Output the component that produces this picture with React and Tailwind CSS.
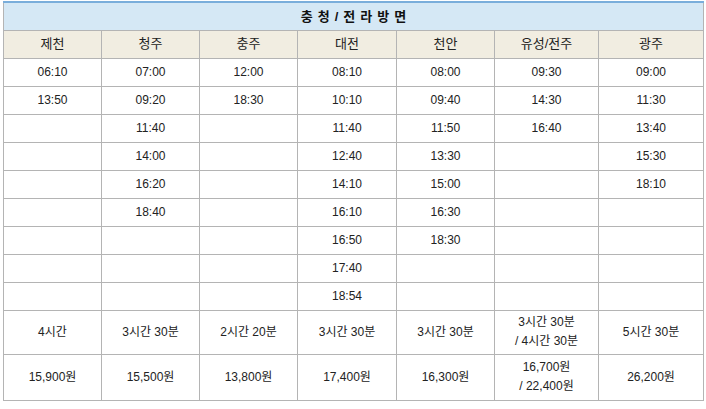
import React from 'react';

const cols = ['제천', '청주', '충주', '대전', '천안', '유성/전주', '광주'];
const widths = ['w-[98px]', 'w-[98px]', 'w-[98px]', 'w-[99px]', 'w-[98px]', 'w-[104px]', 'w-[105px]'];

const times = [
    ['06:10', '13:50'],
    ['07:00', '09:20', '11:40', '14:00', '16:20', '18:40'],
    ['12:00', '18:30'],
    ['08:10', '10:10', '11:40', '12:40', '14:10', '16:10', '16:50', '17:40', '18:54'],
    ['08:00', '09:40', '11:50', '13:30', '15:00', '16:30', '18:30'],
    ['09:30', '14:30', '16:40'],
    ['09:00', '11:30', '13:40', '15:30', '18:10'],
];

const durations = ['4시간', '3시간 30분', '2시간 20분', '3시간 30분', '3시간 30분', ['3시간 30분', '/ 4시간 30분'], '5시간 30분'];
const prices = ['15,900원', '15,500원', '13,800원', '17,400원', '16,300원', ['16,700원', '/ 22,400원'], '26,200원'];

const cell = 'border border-[#b4b4b4] text-center align-middle p-0';

const Lines = ({ v }) => Array.isArray(v) ? (
    <div className="leading-[19px]">{v[0]}<br />{v[1]}</div>
) : v;

const App = () => {
    const rows = Array.from({ length: 9 }, (_, i) => times.map(t => t[i] || ''));

    return (
        <div className="bg-white min-h-[409px] pt-[1px] pl-[3px]" style={{ fontFamily: '"Liberation Sans", "Noto Sans CJK KR", sans-serif' }}>
            <table className="w-[700px] border-collapse table-fixed text-[12px] text-[#222] border-t-2 border-t-[#7aaedb]">
                <colgroup>
                    {widths.map((w, i) => <col key={i} className={w} />)}
                </colgroup>
                <thead>
                    <tr className="h-[28px]">
                        <th colSpan={7} className="border border-[#b4b4b4] border-t-0 bg-[#d5e8f5] font-bold text-[13px] tracking-[5px] text-[#111] pl-[5px]">
                            충청/전라방면
                        </th>
                    </tr>
                    <tr className="h-[28px] bg-[#f1ede1]">
                        {cols.map(c => (
                            <th key={c} className={`${cell} font-normal text-[13px]`}>{c}</th>
                        ))}
                    </tr>
                </thead>
                <tbody>
                    {rows.map((r, i) => (
                        <tr key={i} className="h-[28px]">
                            {r.map((t, j) => <td key={j} className={cell}>{t}</td>)}
                        </tr>
                    ))}
                    <tr className="h-[44px]">
                        {durations.map((d, j) => <td key={j} className={cell}><Lines v={d} /></td>)}
                    </tr>
                    <tr className="h-[46px]">
                        {prices.map((p, j) => <td key={j} className={cell}><Lines v={p} /></td>)}
                    </tr>
                </tbody>
            </table>
        </div>
    );
};

export default App;
